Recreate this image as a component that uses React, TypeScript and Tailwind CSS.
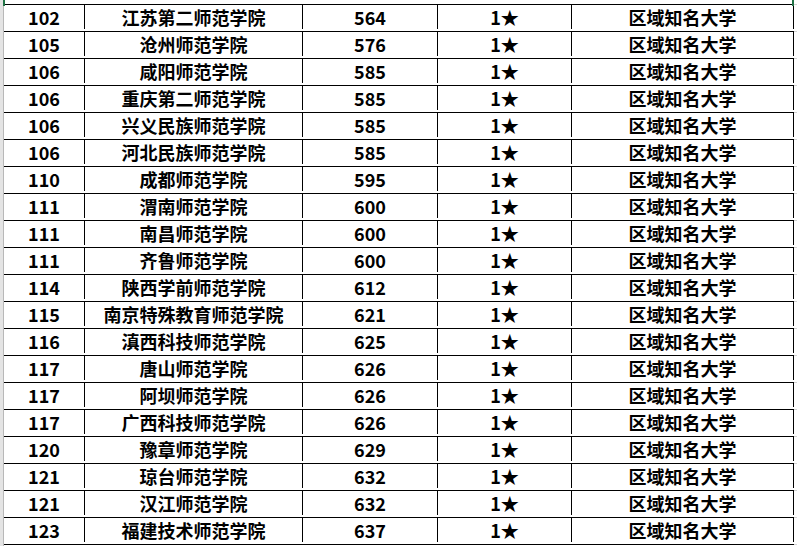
const rows: [string, string, string][] = [
  ['102', '江苏第二师范学院', '564'],
  ['105', '沧州师范学院', '576'],
  ['106', '咸阳师范学院', '585'],
  ['106', '重庆第二师范学院', '585'],
  ['106', '兴义民族师范学院', '585'],
  ['106', '河北民族师范学院', '585'],
  ['110', '成都师范学院', '595'],
  ['111', '渭南师范学院', '600'],
  ['111', '南昌师范学院', '600'],
  ['111', '齐鲁师范学院', '600'],
  ['114', '陕西学前师范学院', '612'],
  ['115', '南京特殊教育师范学院', '621'],
  ['116', '滇西科技师范学院', '625'],
  ['117', '唐山师范学院', '626'],
  ['117', '阿坝师范学院', '626'],
  ['117', '广西科技师范学院', '626'],
  ['120', '豫章师范学院', '629'],
  ['121', '琼台师范学院', '632'],
  ['121', '汉江师范学院', '632'],
  ['123', '福建技术师范学院', '637'],
];

export default function App() {
  return (
    <div
      className="relative flex h-[546px] w-[797px] overflow-hidden bg-white text-[18px] font-bold leading-none text-black"
      style={{ fontFamily: '"Noto Sans CJK SC", "Noto Sans", sans-serif' }}
    >
      {/* row header strip */}
      <div className="h-full w-[4px] border-r border-[#b8b8b8] bg-[#e4e4e4]" />
      <div className="absolute left-[3px] top-0 h-[6px] w-[2px] bg-[#217346]" />
      <div className="absolute right-[3px] top-0 h-[6px] w-[2px] bg-[#217346]" />

      <div className="flex flex-col pt-[4px]">
        {rows.map(([rank, name, score], i) => (
          <div key={i} className="flex h-[27px] border-t border-black pb-[2px]">
            <div className="flex w-[81px] items-center justify-center border-r border-black">{rank}</div>
            <div className="flex w-[218px] items-center justify-center border-r border-black">{name}</div>
            <div className="flex w-[135px] items-center justify-center border-r border-black">{score}</div>
            <div className="flex w-[134px] items-center justify-center border-r border-black">1★</div>
            <div className="flex w-[222px] items-center justify-center border-r border-black">区域知名大学</div>
          </div>
        ))}
        <div className="border-t border-black" />
      </div>

      <div className="flex flex-1 flex-col pt-[4px]">
        {rows.map((_, i) => (
          <div key={i} className="h-[27px] border-t border-[#d4d4d4]" />
        ))}
        <div className="border-t border-[#d4d4d4]" />
      </div>
    </div>
  );
}
